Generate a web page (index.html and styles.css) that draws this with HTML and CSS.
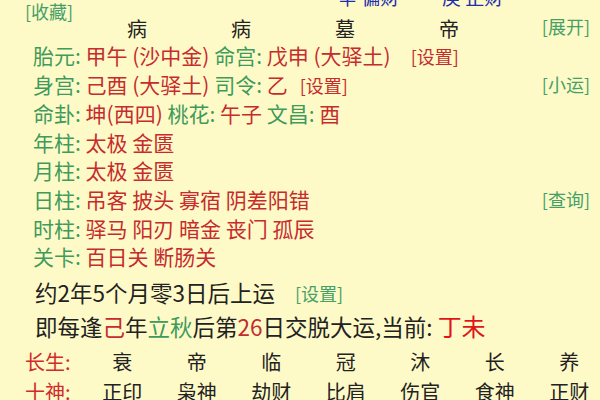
FILE: index.html
```html
<!DOCTYPE html>
<html lang="zh-CN">
<head>
<meta charset="utf-8">
<link rel="stylesheet" href="styles.css">
</head>
<body>
<div class="page">
  <div class="blue-row"><span class="blue-a">辛 偏财</span><span>庚 正财</span></div>
  <div class="fav"><span class="btn g">[收藏]</span></div>
  <div class="state-row">
    <span class="cell">病</span><span class="cell">病</span><span class="cell">墓</span><span class="cell">帝</span>
    <span class="btn g right">[展开]</span>
  </div>
  <div class="rows">
    <div class="row"><div><span class="k">胎元:</span> <span class="v">甲午 (沙中金)</span> <span class="k">命宫:</span> <span class="v">戊申 (大驿土)</span><span class="btn r set wide">[设置]</span></div></div>
    <div class="row"><div><span class="k">身宫:</span> <span class="v">己酉 (大驿土)</span> <span class="k">司令:</span> <span class="v">乙</span><span class="btn r set">[设置]</span></div><span class="btn g">[小运]</span></div>
    <div class="row"><div><span class="k">命卦:</span> <span class="v">坤(西四)</span> <span class="k">桃花:</span> <span class="v">午子</span> <span class="k">文昌:</span> <span class="v">酉</span></div></div>
    <div class="row"><div><span class="k">年柱:</span> <span class="v">太极 金匮</span></div></div>
    <div class="row"><div><span class="k">月柱:</span> <span class="v">太极 金匮</span></div></div>
    <div class="row"><div><span class="k">日柱:</span> <span class="v">吊客 披头 寡宿 阴差阳错</span></div><span class="btn g">[查询]</span></div>
    <div class="row"><div><span class="k">时柱:</span> <span class="v">驿马 阳刃 暗金 丧门 孤辰</span></div></div>
    <div class="row"><div><span class="k">关卡:</span> <span class="v">百日关 断肠关</span></div></div>
  </div>
  <div class="luck">
    <div class="line">约2年5个月零3日后上运<span class="btn g set wide">[设置]</span></div>
    <div class="line">即每逢<span class="r">己</span>年<span class="gr">立秋</span>后第<span class="r">26</span>日交脱大运,当前: <span class="cur">丁未</span></div>
  </div>
  <div class="grid">
    <span class="lab">长生:</span>
    <span>衰</span><span>帝</span><span>临</span><span>冠</span><span>沐</span><span>长</span><span>养</span>
    <span class="lab">十神:</span>
    <span>正印</span><span>枭神</span><span>劫财</span><span>比肩</span><span>伤官</span><span>食神</span><span>正财</span>
  </div>
</div>
</body>
</html>
```
FILE: styles.css
```css
html, body {
  margin: 0;
  padding: 0;
  width: 600px;
  height: 400px;
  overflow: hidden;
  background: #fefac8;
}
.page {
  font-family: "Noto Sans CJK SC", "Noto Sans", sans-serif;
  font-size: 20px;
  color: #222;
}
.blue-row {
  display: flex;
  height: 20px;
  line-height: 20px;
  margin-top: -13px;
  padding-left: 338px;
  color: #1f2fae;
  font-size: 19px;
}
.blue-a { width: 104px; }
.fav {
  line-height: 16px;
  margin-top: -4px;
  padding-left: 25px;
}
.btn { font-size: 18px; }
.g { color: #45a067; }
.r { color: #c62b2e; }
.gr { color: #3f9a5c; }
.state-row {
  display: flex;
  align-items: center;
  height: 18px;
  padding-left: 85px;
  padding-right: 10px;
}
.cell {
  width: 104px;
  text-align: center;
}
.right { margin-left: auto; margin-top: -4px; }
.rows {
  margin-top: 4.6px;
  padding-left: 33px;
  padding-right: 10px;
  font-size: 21px;
}
.row {
  display: flex;
  justify-content: space-between;
  align-items: center;
  line-height: 28.7px;
  height: 28.7px;
}
.k { color: #3f9a5c; }
.v { color: #c62b2e; }
.set { margin-left: 12px; }
.set.wide { margin-left: 20px; }
.luck {
  margin-top: 5px;
  padding-left: 35px;
}
.line {
  line-height: 33px;
  height: 33px;
  font-size: 22.5px;
}
.line .btn { vertical-align: 1px; }
.cur {
  color: #e0141a;
  font-size: 24px;
}
.grid {
  display: grid;
  grid-template-columns: 60px repeat(7, 74.5px);
  grid-auto-rows: 30px;
  align-items: center;
  margin-top: 4.5px;
  padding-left: 25px;
  text-align: center;
}
.grid .lab {
  color: #d02a2a;
  text-align: left;
}
```
